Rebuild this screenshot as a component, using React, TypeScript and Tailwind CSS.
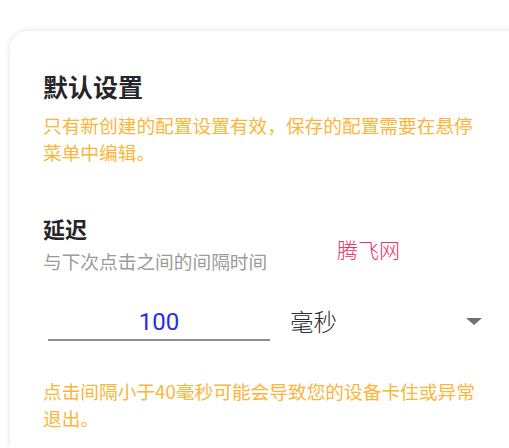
import type { FC } from 'react'

const cjk = "font-['Noto_Sans_CJK_SC',sans-serif]"

const Hint: FC<{ text: string; className?: string }> = ({ text, className = '' }) => (
  <p className={`m-0 w-[440px] text-[18.7px] leading-[27px] text-[#fbb53a] ${className}`}>{text}</p>
)

export default function App() {
  return (
    <div className={`relative h-[448px] w-[509px] overflow-hidden bg-white pl-[10px] pt-[31px] ${cjk}`}>
      <div className="h-[417px] w-[560px] rounded-tl-[18px] bg-white pl-[33px] pt-[39px] shadow-[0_0_6px_rgba(0,0,0,0.12)]">
        {/* Default settings */}
        <h2 className="m-0 text-[25px] font-bold leading-[33px] text-[#26262a]">默认设置</h2>
        <Hint className="mt-[8px]" text="只有新创建的配置设置有效，保存的配置需要在悬停菜单中编辑。" />

        {/* Delay */}
        <h3 className="m-0 mt-[48px] text-[22px] font-bold leading-[30px] text-[#26262a]">延迟</h3>
        <p className="m-0 mt-[4px] text-[18.7px] leading-[27px] text-[#9b9b9b]">与下次点击之间的间隔时间</p>

        <div className="mt-[25px] flex items-end">
          <div className="ml-[5px] flex h-[42px] w-[222px] items-center justify-center border-b-2 border-[#8e8e8e] pt-[6px]">
            <span className="font-['Roboto',sans-serif] text-[24px] leading-none text-[#2b2be6]">100</span>
          </div>
          <div className="ml-[20px] flex h-[42px] w-[192px] items-center justify-between pt-[4px]">
            <span className="text-[23.5px] font-light leading-none text-[#2e2e2e]">毫秒</span>
            <svg width="16" height="8" viewBox="0 0 16 8">
              <path d="M0 0 L16 0 L8 7 Z" fill="#707070" />
            </svg>
          </div>
        </div>

        <Hint className="mt-[36px]" text="点击间隔小于40毫秒可能会导致您的设备卡住或异常退出。" />
      </div>

      {/* watermark */}
      <span className="absolute left-[337px] top-[235px] text-[21px] font-light leading-[28px] text-[#f0306a]">
        腾飞网
      </span>
    </div>
  )
}
